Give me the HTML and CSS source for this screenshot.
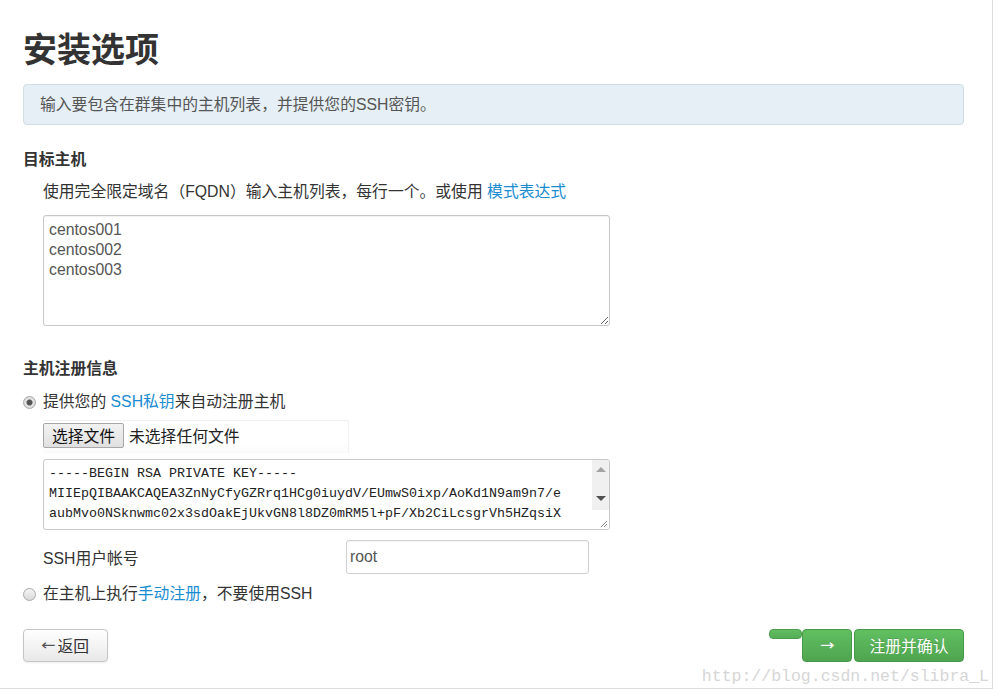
FILE: index.html
```html
<!DOCTYPE html>
<html lang="zh">
<head>
<meta charset="utf-8">
<title>安装选项</title>
<link rel="stylesheet" href="styles.css">
</head>
<body>
<div class="page">
  <h2 class="title">安装选项</h2>
  <div class="alert">输入要包含在群集中的主机列表，并提供您的SSH密钥。</div>

  <h5 class="section">目标主机</h5>
  <div class="indent">
    <p class="desc">使用完全限定域名（FQDN）输入主机列表，每行一个。或使用 <a class="link" href="#">模式表达式</a></p>
    <textarea class="hosts">centos001
centos002
centos003</textarea>
  </div>

  <h5 class="section second">主机注册信息</h5>
  <label class="radio-row">
    <input type="radio" name="reg" class="radio" checked>
    <span>提供您的 <a class="link" href="#">SSH私钥</a>来自动注册主机</span>
  </label>
  <div class="indent">
    <div class="file-box">
      <span class="file-btn">选择文件</span>
      <span class="file-name">未选择任何文件</span>
    </div>
    <div class="keybox">
      <div class="keytext">-----BEGIN RSA PRIVATE KEY-----
MIIEpQIBAAKCAQEA3ZnNyCfyGZRrq1HCg0iuydV/EUmwS0ixp/AoKd1N9am9n7/e
aubMvo0NSknwmc02x3sdOakEjUkvGN8l8DZ0mRM5l+pF/Xb2CiLcsgrVh5HZqsiX</div>
      <div class="vscroll">
        <div class="sb-track">
          <span class="arrow up"></span>
          <span class="arrow down"></span>
        </div>
        <div class="sb-corner">
          <svg width="8" height="8" viewBox="0 0 8 8"><path d="M7 1L1 7M7 4L4 7" stroke="#888" stroke-width="1" fill="none"/></svg>
        </div>
      </div>
    </div>
    <div class="user-row">
      <span class="user-label">SSH用户帐号</span>
      <input class="user-input" type="text" value="root">
    </div>
  </div>
  <label class="radio-row second-radio">
    <input type="radio" name="reg" class="radio">
    <span>在主机上执行<a class="link" href="#">手动注册</a>，不要使用SSH</span>
  </label>

  <div class="actions">
    <button class="btn btn-back"><span class="glyph-arrow">←</span>返回</button>
    <div class="right-group">
      <span class="green-stub"></span>
      <button class="btn btn-green btn-arrow"><span class="glyph-arrow">→</span></button>
      <button class="btn btn-green btn-confirm">注册并确认</button>
    </div>
  </div>

  <div class="watermark">http://blog.csdn.net/slibra_L</div>
</div>
</body>
</html>
```

FILE: styles.css
```css
* { box-sizing: border-box; }

html, body {
  margin: 0;
  padding: 0;
  background: #fff;
}

body {
  font-family: "Liberation Sans", "Noto Sans CJK SC", sans-serif;
  font-size: 15.8px;
  color: #333;
}

.page {
  position: relative;
  width: 993px;
  height: 689px;
  padding: 30px 28px 0 23px;
  border-right: 1px solid #dcdcdc;
  border-bottom: 1px solid #dcdcdc;
}

.title {
  margin: 0;
  font-size: 34px;
  line-height: 40px;
  font-weight: bold;
  color: #333;
}

.alert {
  margin-top: 14px;
  height: 41px;
  padding: 9px 16px;
  line-height: 21px;
  background: #e5eff5;
  border: 1px solid #d0dde5;
  border-radius: 4px;
  color: #555;
}

.section {
  margin: 24px 0 0;
  font-size: 15.8px;
  line-height: 22px;
  font-weight: bold;
  color: #333;
}

.section.second {
  margin-top: 32px;
}

.indent {
  padding-left: 20px;
}

.desc {
  margin: 10px 0 0;
  line-height: 22px;
}

.link {
  color: #1a8ccf;
  text-decoration: none;
}

.hosts {
  display: block;
  margin-top: 12px;
  width: 567px;
  height: 111px;
  padding: 4px 5px;
  border: 1px solid #c8c8c8;
  border-radius: 3px;
  box-shadow: inset 0 1px 1px rgba(0,0,0,0.06);
  font-family: "Liberation Sans", "Noto Sans CJK SC", sans-serif;
  font-size: 15.8px;
  line-height: 20px;
  color: #555;
  resize: vertical;
  outline: none;
}

.radio-row {
  display: flex;
  align-items: center;
  gap: 7px;
  margin-top: 11px;
  line-height: 22px;
}

.radio-row.second-radio {
  margin-top: 9px;
}

.radio {
  -webkit-appearance: none;
  appearance: none;
  margin: 0;
  width: 13px;
  height: 13px;
  border-radius: 50%;
  border: 1px solid #a9a9a9;
  background: linear-gradient(#f4f4f4, #d9d9d9);
}

.radio:checked {
  background: radial-gradient(circle, #555 0, #555 2.5px, #e4e4e4 3.5px, #d0d0d0 100%);
}

.file-box {
  display: flex;
  align-items: center;
  margin-top: 7px;
  width: 306px;
  height: 33px;
  padding: 1px 0 5px 0;
  border-top: 1px solid #f0f0f0;
  border-right: 1px solid #f2f2f2;
  background: linear-gradient(#fff 70%, #fafafa);
}

.file-btn {
  display: inline-flex;
  align-items: center;
  justify-content: center;
  width: 81px;
  height: 25px;
  background: linear-gradient(#f2f2f2, #e0e0e0);
  border: 1px solid #a8a8a8;
  border-radius: 2px;
  color: #111;
  font-size: 15.8px;
}

.file-name {
  margin-left: 5px;
  color: #222;
}

.keybox {
  display: flex;
  margin-top: 6px;
  width: 567px;
  height: 71px;
  border: 1px solid #c8c8c8;
  border-radius: 3px;
  overflow: hidden;
}

.keytext {
  flex: 1;
  padding: 4px 5px;
  white-space: pre;
  overflow: hidden;
  font-family: "Liberation Mono", monospace;
  font-size: 13.33px;
  line-height: 20px;
  color: #222;
}

.vscroll {
  width: 17px;
  display: flex;
  flex-direction: column;
}

.sb-track {
  flex: 1;
  background: #f0f0f0;
  display: flex;
  flex-direction: column;
  align-items: center;
  justify-content: space-between;
  padding: 7px 0 9px;
}

.arrow {
  width: 0;
  height: 0;
  border-left: 5px solid transparent;
  border-right: 5px solid transparent;
}

.arrow.up {
  border-bottom: 5px solid #a3a3a3;
}

.arrow.down {
  border-top: 5px solid #505050;
}

.sb-corner {
  height: 19px;
  background: #fff;
  display: flex;
  align-items: flex-end;
  justify-content: flex-end;
  padding: 0 1px 1px 0;
}

.sb-corner svg {
  display: block;
}

.user-row {
  display: flex;
  align-items: center;
  margin-top: 10px;
}

.user-label {
  width: 303px;
}

.user-input {
  width: 243px;
  height: 34px;
  padding: 0 3px;
  border: 1px solid #cfcfcf;
  border-radius: 3px;
  font-family: "Liberation Sans", "Noto Sans CJK SC", sans-serif;
  font-size: 15.8px;
  color: #555;
  outline: none;
  box-shadow: inset 0 1px 1px rgba(0,0,0,0.04);
}

.actions {
  display: flex;
  justify-content: space-between;
  align-items: flex-start;
  margin-top: 24px;
}

.btn {
  display: inline-flex;
  align-items: center;
  justify-content: center;
  height: 33px;
  padding: 0;
  border-radius: 4px;
  font-family: "Liberation Sans", "Noto Sans CJK SC", sans-serif;
  font-size: 15.8px;
  cursor: pointer;
}

.glyph-arrow {
  font-family: "DejaVu Sans", sans-serif;
  font-size: 15px;
  line-height: 1;
  transform: scaleX(1.15);
}

.btn-back {
  width: 85px;
  gap: 3px;
  color: #333;
  background: linear-gradient(#ffffff, #e8e8e8);
  border: 1px solid #c6c6c6;
  box-shadow: 0 1px 2px rgba(0,0,0,0.08);
}

.btn-back .glyph-arrow {
  color: #555;
}

.right-group {
  display: flex;
  align-items: flex-start;
}

.green-stub {
  width: 33px;
  height: 10px;
  margin-left: 2px;
  background: linear-gradient(#62bd62, #55ad55);
  border-radius: 4px;
  border: 1px solid #4c9e4c;
}

.btn-green {
  color: #fff;
  background: linear-gradient(#61bf61, #4fa54f);
  border: 1px solid #47984a;
  text-shadow: 0 -1px 0 rgba(0,0,0,0.15);
}

.btn-arrow {
  width: 50px;
}

.btn-confirm {
  margin-left: 2px;
  width: 110px;
}

.watermark {
  position: absolute;
  right: 3px;
  bottom: 1px;
  font-family: "Liberation Mono", monospace;
  font-size: 16.5px;
  line-height: 20px;
  color: #d6d6d6;
}
```
